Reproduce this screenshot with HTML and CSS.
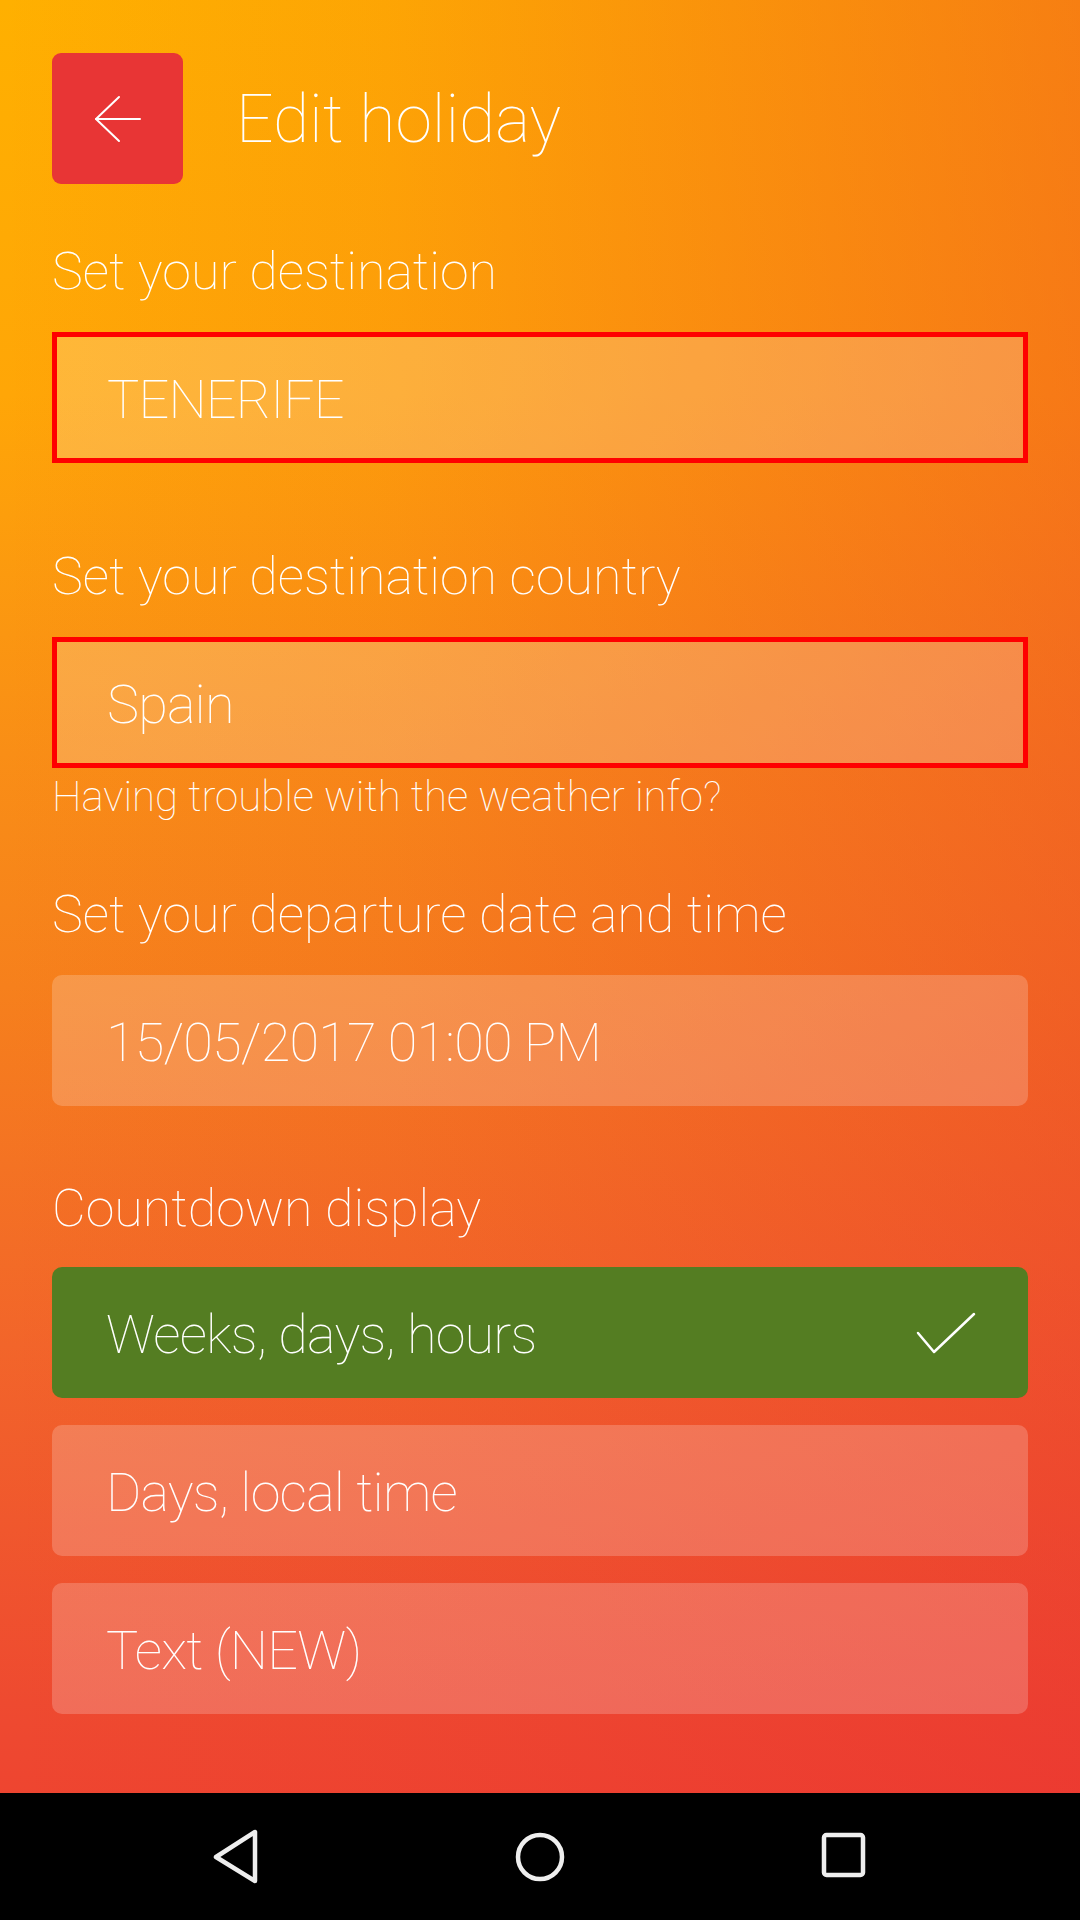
FILE: index.html
```html
<!DOCTYPE html>
<html lang="en">
<head>
<meta charset="utf-8">
<title>Edit holiday</title>
<link rel="stylesheet" href="styles.css">
</head>
<body>
<div class="screen">
  <main class="content">
    <header class="header">
      <button class="back" aria-label="Back">
        <svg width="48" height="48" viewBox="0 0 48 48" fill="none" stroke="#fff" stroke-width="2" stroke-linecap="round" stroke-linejoin="round">
          <path d="M2 24 H46"/>
          <path d="M25 2 L2 24 L25 46"/>
        </svg>
      </button>
      <h1 class="title">Edit holiday</h1>
    </header>

    <section class="field field-first">
      <div class="label">Set your destination</div>
      <div class="box box-error">TENERIFE</div>
    </section>

    <section class="field field-country">
      <div class="label">Set your destination country</div>
      <div class="box box-error">Spain</div>
      <div class="hint">Having trouble with the weather info?</div>
    </section>

    <section class="field field-date">
      <div class="label">Set your departure date and time</div>
      <div class="box box-soft">15/05/2017 01:00 PM</div>
    </section>

    <section class="field field-countdown">
      <div class="label">Countdown display</div>
      <div class="options">
        <div class="box box-selected">
          <span>Weeks, days, hours</span>
          <svg class="check" width="60" height="42" viewBox="0 0 60 42" fill="none" stroke="#fff" stroke-width="2.5" stroke-linecap="round" stroke-linejoin="round">
            <path d="M2 21 L18 40 L58 2"/>
          </svg>
        </div>
        <div class="box box-soft">Days, local time</div>
        <div class="box box-soft">Text (NEW)</div>
      </div>
    </section>
  </main>

  <nav class="navbar">
    <svg class="nav-icon" width="48" height="56" viewBox="0 0 48 56" fill="none" stroke="#eeeeee" stroke-width="4.5" stroke-linejoin="round" stroke-linecap="round">
      <path d="M43 3 L43 52 L4 28 Z"/>
    </svg>
    <svg class="nav-icon" width="56" height="56" viewBox="0 0 56 56" fill="none" stroke="#eeeeee" stroke-width="4.5">
      <circle cx="28" cy="28" r="22"/>
    </svg>
    <svg class="nav-icon" width="48" height="56" viewBox="0 0 48 56" fill="none" stroke="#eeeeee" stroke-width="4.5" stroke-linejoin="round">
      <rect x="4" y="6" width="39" height="40" rx="2.5"/>
    </svg>
  </nav>
</div>
</body>
</html>
```

FILE: styles.css
```css
* {
  box-sizing: border-box;
}

html, body {
  margin: 0;
  padding: 0;
}

body {
  width: 1080px;
  height: 1920px;
  font-family: "Roboto Thin", Roboto, "Noto Sans", "Liberation Sans", sans-serif;
  font-weight: 100;
  color: #ffffff;
  overflow: hidden;
}

.screen {
  display: flex;
  flex-direction: column;
  width: 1080px;
  height: 1920px;
}

.content {
  height: 1793px;
  padding: 53px 52px 0 52px;
  background:
    linear-gradient(to right, rgba(232, 40, 50, 0) 0%, rgba(232, 40, 50, 0.08) 35%, rgba(232, 40, 50, 0.36) 100%),
    linear-gradient(to bottom, #ffb000 0%, #ffa607 22%, #f98e16 42%, #f6801c 55%, #f2652a 75%, #ee4a30 95%, #ee4530 100%);
  display: flex;
  flex-direction: column;
}

.header {
  display: flex;
  align-items: center;
  gap: 53px;
  height: 131px;
}

.back {
  width: 131px;
  height: 131px;
  border: none;
  border-radius: 9px;
  background: #e83535;
  display: flex;
  align-items: center;
  justify-content: center;
  padding: 0;
}

.title {
  margin: 0;
  font-size: 66px;
  font-weight: 100;
  line-height: 80px;
  padding-top: 2px;
}

.label {
  font-size: 52px;
  line-height: 60px;
  white-space: nowrap;
}

.field-first {
  margin-top: 58px;
}

.field-country {
  margin-top: 84px;
}

.field-date {
  margin-top: 63px;
}

.field-countdown {
  margin-top: 73px;
}

.field .box {
  margin-top: 30px;
}

.box {
  height: 131px;
  display: flex;
  align-items: center;
  padding: 4px 54px 0 54px;
  font-size: 54px;
  letter-spacing: -0.8px;
  white-space: nowrap;
}

.box-error {
  border: 5px solid #ff0000;
  background: rgba(255, 255, 255, 0.2);
  padding-left: 50px;
}

.box-soft {
  border-radius: 10px;
  background: rgba(255, 255, 255, 0.2);
}

.box-selected {
  border-radius: 10px;
  background: #547d22;
  justify-content: space-between;
  padding-right: 52px;
}

.check {
  margin-top: -4px;
}

.hint {
  margin-top: 4px;
  font-size: 42px;
  line-height: 50px;
  white-space: nowrap;
}

.options {
  margin-top: 28px;
  display: flex;
  flex-direction: column;
  gap: 27px;
}

.options .box {
  margin-top: 0;
}

.navbar {
  height: 127px;
  background: #000000;
  display: flex;
  align-items: center;
  justify-content: space-between;
  padding: 0 212px 0 212px;
}

.nav-icon {
  display: block;
}
```
